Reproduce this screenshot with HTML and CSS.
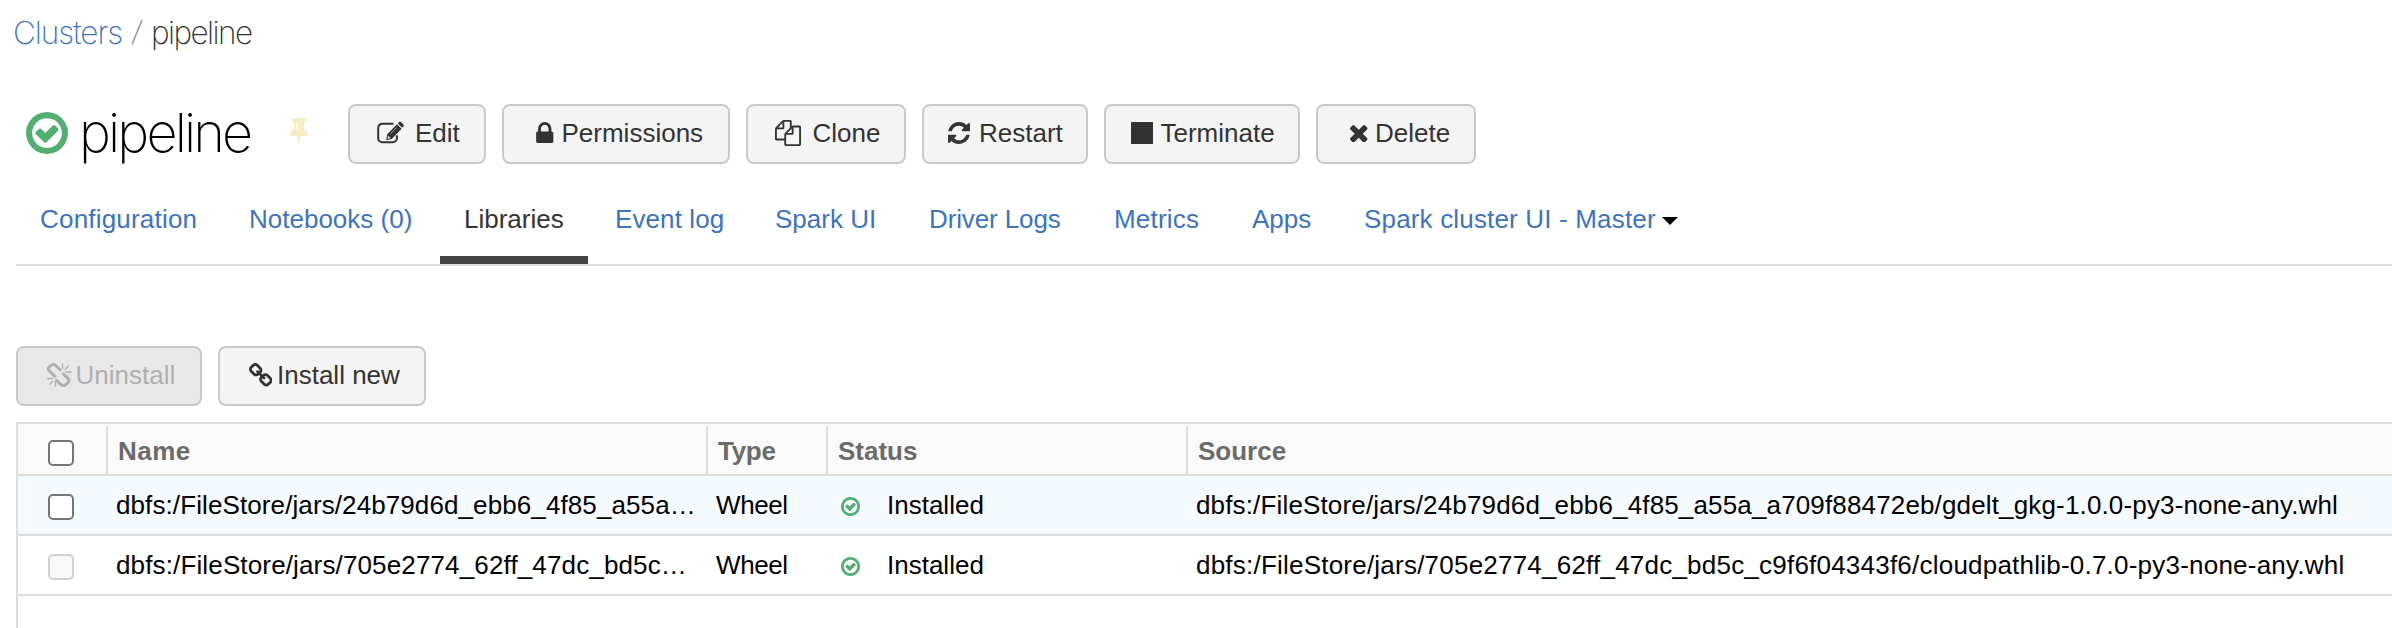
FILE: index.html
```
<!DOCTYPE html>
<html lang="en">
<head>
<meta charset="utf-8">
<title>Clusters / pipeline</title>
<link rel="stylesheet" href="styles.css">
</head>
<body>
<svg class="defs" width="0" height="0">
  <symbol id="check-circle" viewBox="128 128 1536 1536"><path d="M1299 813l-422 422q-19 19-45 19t-45-19l-294-294q-19-19-19-45t19-45l102-102q19-19 45-19t45 19l147 147 275-275q19-19 45-19t45 19l102 102q19 19 19 45t-19 45zm141 83q0-148-73-273t-198-198-273-73-273 73-198 198-73 273 73 273 198 198 273 73 273-73 198-198 73-273zm224 0q0 209-103 385.500t-279.500 279.500-385.500 103-385.500-103-279.500-279.500-103-385.500 103-385.500 279.500-279.500 385.500-103 385.500 103 279.500 279.500 103 385.500z"/></symbol>
</svg>

<nav class="breadcrumb">
  <a class="crumb-link">Clusters</a>
  <svg class="crumb-sep" viewBox="0 0 12 26"><path d="M1 25.500L11 1"/></svg>
  <span class="crumb-current">pipeline</span>
</nav>

<header class="cluster-header">
  <svg class="state-icon"><use href="#check-circle"/></svg>
  <h1 class="cluster-name">pipeline</h1>
  <svg class="pin" viewBox="320 128 1152 1664"><path d="M800 864v-448q0-14-9-23t-23-9-23 9-9 23v448q0 14 9 23t23 9 23-9 9-23zm672 352q0 26-19 45t-45 19h-429l-51 483q-2 12-10.500 20.500t-20.500 8.500h-1q-27 0-32-27l-76-485h-404q-26 0-45-19t-19-45q0-123 78.500-221.500t177.500-98.500v-512q-52 0-90-38t-38-90 38-90 90-38h640q52 0 90 38t38 90-38 90-90 38v512q99 0 177.500 98.500t78.500 221.500z"/></svg>
  <div class="toolbar">
    <button class="btn btn-edit"><svg class="icon" viewBox="7 8 27 23"><path class="stroke" d="M23.500 10.800H12.200a4 4 0 0 0-4 4v10.400a4 4 0 0 0 4 4h10.700a4 4 0 0 0 4-4v-3"/><path d="M16.300 27.300l.9-6.100L27 11.200l4.600 4.600-9.600 9.900zM27.800 10.400l1.300-1.300q1-.8 2 0l2.300 2.300q.8 1 0 2l-1.200 1.400z"/><path class="pencil-light" d="M18.300 25.500v-2.300l1.700 1.700zM20.500 20.800l6.200-6.300"/></svg>Edit</button>
    <button class="btn btn-permissions"><svg class="icon" viewBox="320 128 1152 1408"><path d="M640 768h512v-192q0-106-75-181t-181-75-181 75-75 181v192zm832 96v576q0 40-28 68t-68 28h-960q-40 0-68-28t-28-68v-576q0-40 28-68t68-28h32v-192q0-184 132-316t316-132 316 132 132 316v192h32q40 0 68 28t28 68z"/></svg>Permissions</button>
    <button class="btn btn-clone"><svg class="icon" viewBox="0 0 1792 1792"><path d="M1696 384q40 0 68 28t28 68v1216q0 40-28 68t-68 28h-960q-40 0-68-28t-28-68v-288h-544q-40 0-68-28t-28-68v-672q0-40 20-88t48-76l408-408q28-28 76-48t88-20h416q40 0 68 28t28 68v328q68-40 128-40h416zm-544 213l-299 299h299v-299zm-640-384l-299 299h299v-299zm196 647l316-316v-416h-384v416q0 40-28 68t-68 28h-416v640h512v-256q0-40 20-88t48-76zm956 804v-1152h-384v416q0 40-28 68t-68 28h-416v640h896z"/></svg>Clone</button>
    <button class="btn btn-restart"><svg class="icon" viewBox="128 128 1536 1536"><path d="M1639 1056q0 5-1 7-64 268-268 434.500t-478 166.500q-146 0-282.500-55t-243.500-157l-129 129q-19 19-45 19t-45-19-19-45v-448q0-26 19-45t45-19h448q26 0 45 19t19 45-19 45l-137 137q71 66 161 102t187 36q134 0 250-65t186-179q11-17 53-117 8-23 30-23h192q13 0 22.500 9.500t9.500 22.500zm25-800v448q0 26-19 45t-45 19h-448q-26 0-45-19t-19-45 19-45l138-138q-148-137-349-137-134 0-250 65t-186 179q-11 17-53 117-8 23-30 23h-199q-13 0-22.500-9.500t-9.500-22.500v-7q65-268 270-434.500t480-166.500q146 0 284 55.500t245 156.500l130-129q19-19 45-19t45 19 19 45z"/></svg>Restart</button>
    <button class="btn btn-terminate"><svg class="icon" viewBox="0 0 22 22"><rect width="22" height="22" rx="0.8"/></svg>Terminate</button>
    <button class="btn btn-delete"><svg class="icon" viewBox="302 366 1188 1188"><path d="M1490 1322q0 40-28 68l-136 136q-28 28-68 28t-68-28l-294-294-294 294q-28 28-68 28t-68-28l-136-136q-28-28-28-68t28-68l294-294-294-294q-28-28-28-68t28-68l136-136q28-28 68-28t68 28l294 294 294-294q28-28 68-28t68 28l136 136q28 28 28 68t-28 68l-294 294 294 294q28 28 28 68z"/></svg>Delete</button>
  </div>
</header>

<nav class="tabs">
  <a class="tab tab-configuration">Configuration</a>
  <a class="tab tab-notebooks">Notebooks (0)</a>
  <a class="tab tab-libraries active">Libraries</a>
  <a class="tab tab-events">Event log</a>
  <a class="tab tab-spark">Spark UI</a>
  <a class="tab tab-driver">Driver Logs</a>
  <a class="tab tab-metrics">Metrics</a>
  <a class="tab tab-apps">Apps</a>
  <a class="tab tab-master">Spark cluster UI - Master<svg class="caret" viewBox="0 0 16 8"><path d="M0 0h16L8 8z"/></svg></a>
</nav>

<div class="library-actions">
  <button class="btn btn-uninstall" disabled><svg class="icon" viewBox="7 7.500 24.500 24"><path class="chain" d="M14.800 20.800L9.600 15.600Q7.400 13.300 9.400 11.200L11.200 9.700Q13.400 8 15.700 10L20.200 14.500M16.500 24.800L21.200 29.300Q23.400 31 25.400 29.300L28 27Q29.800 25 28 22.800L23.300 18.300"/><path class="rays" d="M22.500 8v5.500M29 10l-4 4M31.300 16.500h-5.800M15.500 31.200v-5.500M9.500 29l3.700-3.500M7.200 23h5.500"/></svg>Uninstall</button>
  <button class="btn btn-install"><svg class="icon" viewBox="80 16 1632 1632"><path d="M1520 1216q0-40-28-68l-208-208q-28-28-68-28-42 0-72 32 3 3 19 18.500t21.500 21.500 15 19 13 25.500 3.500 27.500q0 40-28 68t-68 28q-15 0-27.500-3.500t-25.500-13-19-15-21.500-21.500-18.500-19q-33 31-33 73 0 40 28 68l206 207q27 27 68 27 40 0 68-26l147-146q28-28 28-67zm-703-705q0-40-28-68l-206-207q-28-28-68-28-39 0-68 27l-147 146q-28 28-28 67 0 40 28 68l208 208q27 27 68 27 42 0 72-31-3-3-19-18.500t-21.500-21.500-15-19-13-25.500-3.500-27.500q0-40 28-68t68-28q15 0 27.500 3.500t25.500 13 19 15 21.500 21.500 18.500 19q33-31 33-73zm895 705q0 120-85 203l-147 146q-83 83-203 83-121 0-204-85l-206-207q-83-83-83-203 0-123 88-209l-88-88q-86 88-208 88-120 0-204-84l-208-208q-84-84-84-204t85-203l147-146q83-83 203-83 121 0 204 85l206 207q83 83 83 203 0 123-88 209l88 88q86-88 208-88 120 0 204 84l208 208q84 84 84 204z"/></svg>Install new</button>
</div>

<section class="table">
  <div class="row head">
    <div class="check-cell"><span class="checkbox"></span></div>
    <div class="th th-name">Name</div>
    <div class="th th-type">Type</div>
    <div class="th">Status</div>
    <div class="th">Source</div>
  </div>
  <div class="row hovered">
    <div class="check-cell"><span class="checkbox"></span></div>
    <div class="td name-first">dbfs:/FileStore/jars/24b79d6d_ebb6_4f85_a55a…</div>
    <div class="td td-type">Wheel</div>
    <div class="td td-status"><svg class="status-icon"><use href="#check-circle"/></svg>Installed</div>
    <div class="td source-first">dbfs:/FileStore/jars/24b79d6d_ebb6_4f85_a55a_a709f88472eb/gdelt_gkg-1.0.0-py3-none-any.whl</div>
  </div>
  <div class="row">
    <div class="check-cell"><span class="checkbox disabled"></span></div>
    <div class="td name-second">dbfs:/FileStore/jars/705e2774_62ff_47dc_bd5c…</div>
    <div class="td td-type">Wheel</div>
    <div class="td td-status"><svg class="status-icon"><use href="#check-circle"/></svg>Installed</div>
    <div class="td source-second">dbfs:/FileStore/jars/705e2774_62ff_47dc_bd5c_c9f6f04343f6/cloudpathlib-0.7.0-py3-none-any.whl</div>
  </div>
</section>
</body>
</html>
```
FILE: styles.css
```
* { box-sizing: border-box; }

body {
  margin: 0;
  height: 628px;
  overflow: hidden;
  display: flex;
  flex-direction: column;
  background: #fff;
  color: #000;
  font: 26px/30px "Liberation Sans", Arial, sans-serif;
  white-space: nowrap;
}

svg { display: block; flex: none; }
.defs { position: absolute; }

/* Breadcrumb */
.breadcrumb {
  display: flex;
  height: 66px;
  padding: 13px 0 0 13px;
  font: 250 31.500px/40px Inter, "Liberation Sans", sans-serif;
}
.crumb-link { width: 118px; color: #3d74bb; letter-spacing: -1.050px; }
.crumb-sep { width: 12px; height: 26px; margin-top: 6px; fill: none; stroke: #999; stroke-width: 1.600; }
.crumb-current { margin-left: 8px; color: #333; letter-spacing: -1.600px; }

/* Cluster header */
.cluster-header { display: flex; height: 134px; padding-left: 26px; align-items: flex-start; }
.state-icon { width: 42px; height: 42px; margin-top: 46px; fill: #54ae72; }
.cluster-name {
  margin: 32px 0 0 11px;
  width: 211px;
  font: 200 54px/70px Inter, "Liberation Sans", sans-serif;
  letter-spacing: -2.850px;
}
.pin { width: 18px; height: 26px; margin-top: 52px; fill: #f6edc4; }
.toolbar { display: flex; gap: 16px; margin: 38px 0 0 40px; }

/* Buttons */
.btn {
  display: flex;
  align-items: center;
  height: 60px;
  margin: 0;
  padding: 0 0 2px;
  border: 2px solid #c9c9c9;
  border-radius: 8px;
  background: #f4f4f4;
  color: #333;
  font: 26px/30px "Liberation Sans", Arial, sans-serif;
  white-space: nowrap;
}
.icon { fill: currentColor; }
.btn-edit { width: 138px; padding-left: 27px; }
.btn-edit .icon { width: 27px; height: 23px; margin: 0 11px 2px 0; }
.stroke { fill: none; stroke: currentColor; stroke-width: 2; }
.pencil-light { fill: #f4f4f4; stroke: #f4f4f4; stroke-width: 0.600; }
.btn-permissions { width: 228px; padding-left: 32px; }
.btn-permissions .icon { width: 17.500px; height: 21px; margin: 0 8px 2px 0; }
.btn-clone { width: 160px; padding-left: 27px; }
.btn-clone .icon { width: 26px; height: 26px; margin-right: 11.500px; }
.btn-restart { width: 166px; padding-left: 24px; }
.btn-restart .icon { width: 22px; height: 22px; margin-right: 9px; }
.btn-terminate { width: 196px; padding-left: 24.500px; }
.btn-terminate .icon { width: 22.500px; height: 22.500px; margin-right: 7.500px; }
.btn-delete { width: 160px; padding-left: 32px; }
.btn-delete .icon { width: 17.500px; height: 17.500px; margin: 1px 7.500px 0 0; }

/* Tabs */
.tabs {
  display: flex;
  height: 66px;
  margin-left: 16px;
  border-bottom: 2px solid #ddd;
  color: #3d74bb;
}
.tab { display: flex; height: 64px; padding: 4px 0 0 24px; }
.tab-configuration { width: 209px; letter-spacing: 0.200px; }
.tab-notebooks { width: 215px; }
.tab-libraries { width: 148px; }
.active { border-bottom: 8px solid #444; color: #333; }
.tab-events { width: 160px; margin-left: 3px; letter-spacing: 0.100px; }
.tab-spark { width: 154px; }
.tab-driver { width: 185px; letter-spacing: -0.120px; }
.tab-metrics { width: 138px; letter-spacing: 0.200px; }
.tab-apps { width: 112px; }
.tab-master { letter-spacing: 0.170px; }
.caret { width: 16px; height: 8px; margin: 13px 0 0 6px; fill: #000; }

/* Library actions */
.library-actions { display: flex; gap: 16px; margin: 80px 0 16px 16px; }
.btn-uninstall { width: 186px; padding-left: 29px; background: #e8e8e8; color: #b0b0b0; }
.btn-uninstall .icon { width: 24.500px; height: 24px; margin-right: 4px; fill: none; stroke: currentColor; }
.chain { stroke-width: 3; stroke-linecap: round; }
.rays { stroke-width: 1.300; }
.btn-install { width: 208px; padding-left: 28.500px; }
.btn-install .icon { width: 23.500px; height: 23.500px; margin-right: 5px; }

/* Libraries table */
.table { flex: 1; margin-left: 16px; border: solid #ddd; border-width: 2px 0 0 2px; }
.row {
  display: grid;
  grid-template-columns: 88px 600px 120px 360px 1fr;
  height: 60px;
  border-bottom: 2px solid #ddd;
}
.head { height: 52px; background: #fafafa; color: #6b6b6b; font-weight: 700; }
.hovered { background: #f5faff; }
.check-cell { display: flex; align-items: center; padding: 4px 0 0 30px; }
.head .check-cell { padding-top: 8px; }
.checkbox { width: 26px; height: 26px; border: 2px solid #767676; border-radius: 5px; background: #fff; }
.disabled { border-color: #d1d1d1; background: #f8f8f8; }
.th { margin-top: 2px; padding: 10px 0 0 10px; border-left: 2px solid #ddd; }
.th-name { letter-spacing: 0.500px; }
.th-type { letter-spacing: -0.300px; }
.td { display: flex; align-items: center; padding-left: 10px; }
.name-first { letter-spacing: 0.100px; }
.name-second { letter-spacing: 0.140px; }
.source-first { letter-spacing: 0.150px; }
.source-second { letter-spacing: 0.220px; }
.td-type { padding-left: 10px; letter-spacing: -0.400px; }
.td-status { padding-left: 15px; }
.status-icon { width: 19px; height: 19px; margin: 3px 27px 0 0; fill: #54ae72; }
```
